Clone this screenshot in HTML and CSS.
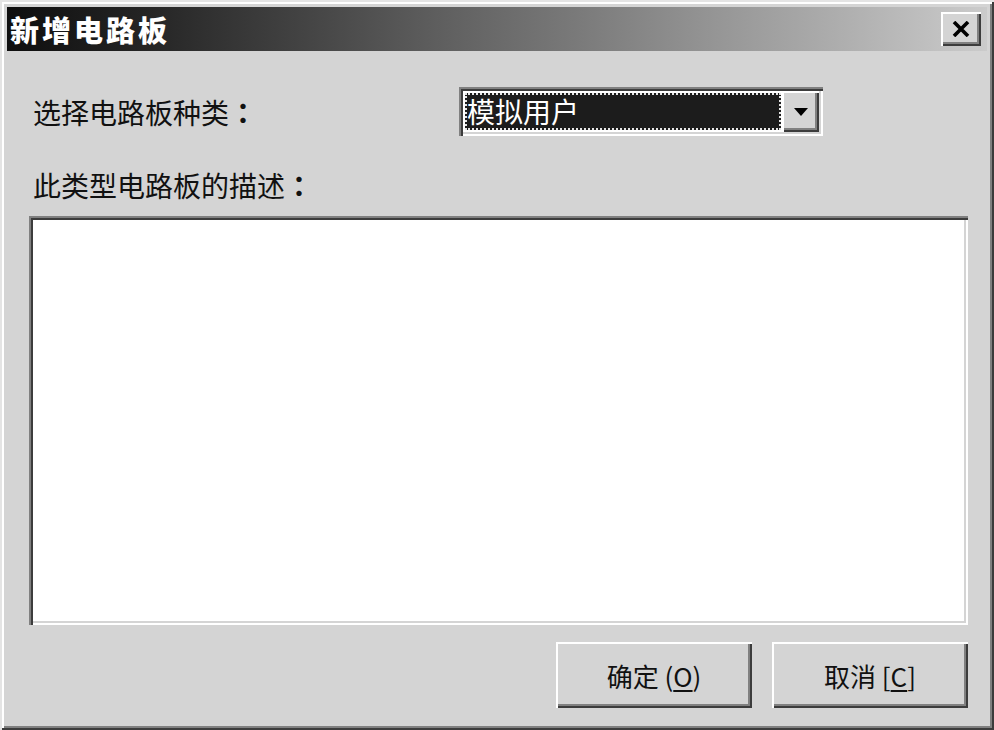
FILE: index.html
```html
<!DOCTYPE html>
<html lang="zh-CN">
<head>
  <meta charset="UTF-8">
  <title>新增电路板</title>
  <link rel="stylesheet" href="styles.css">
</head>
<body>
  <div class="window">
    <header class="titlebar">
      <span class="title">新增电路板</span>
      <button class="close" aria-label="关闭">
        <svg width="18" height="16" viewBox="0 0 18 16"><path d="M2 1 L16 15 M16 1 L2 15" stroke="#000" stroke-width="3.6" fill="none"/></svg>
      </button>
    </header>
    <main class="content">
      <div class="row">
        <label class="label">选择电路板种类<span class="colon">：</span></label>
        <div class="combo">
          <div class="combo-value">模拟用户</div>
          <div class="combo-btn">
            <svg width="14" height="8" viewBox="0 0 14 8"><path d="M0 0 H14 L7 8 Z" fill="#000"/></svg>
          </div>
        </div>
      </div>
      <label class="label label-desc">此类型电路板的描述<span class="colon">：</span></label>
      <div class="memo"></div>
      <div class="actions">
        <button class="btn">确定 (<u>O</u>)</button>
        <button class="btn">取消 [<u>C</u>]</button>
      </div>
    </main>
  </div>
</body>
</html>
```

FILE: styles.css
```css
:root {
  --face: #d4d4d4;
  --light: #e4e4e4;
  --shadow: #808080;
  --dark: #3c3c3c;
  --font: "Noto Sans CJK SC", "Noto Sans", sans-serif;
}

body {
  margin: 0;
  background: var(--face);
  font-family: var(--font);
}

.window {
  width: 994px;
  height: 730px;
  box-sizing: border-box;
  padding: 7px;
  background: var(--face);
  display: flex;
  flex-direction: column;
  box-shadow:
    inset 2px 2px var(--light),
    inset -2px -2px var(--dark),
    inset 4px 4px #fff,
    inset -4px -4px var(--shadow);
}

/* title bar */
.titlebar {
  height: 44px;
  flex-shrink: 0;
  display: flex;
  align-items: center;
  justify-content: space-between;
  background: linear-gradient(to right, #0e0e0e 0%, #262626 15%, #cbcbcb 100%);
}

.title {
  padding-left: 3px;
  color: #fff;
  font-size: 29px;
  font-weight: 900;
  letter-spacing: 3px;
  line-height: 44px;
}

.close {
  width: 40px;
  height: 34px;
  margin-right: 6px;
  padding: 0;
  border: 0;
  display: flex;
  align-items: center;
  justify-content: center;
  background: var(--face);
  box-shadow:
    inset 2px 2px #fff,
    inset -2px -2px var(--dark),
    inset -4px -4px var(--shadow);
}

/* body */
.content {
  padding: 0 19px 0 22px;
  display: flex;
  flex-direction: column;
}

.row {
  margin-top: 36px;
  height: 49px;
  display: grid;
  grid-template-columns: 430px 364px;
  align-items: center;
}

.label {
  padding-left: 4px;
  font-size: 28px;
  line-height: 32px;
  color: #111;
}

.colon {
  display: inline-block;
  width: 28px;
  text-align: center;
  font-family: "Noto Sans CJK TC", sans-serif;
  font-weight: 700;
}

.label-desc {
  margin-top: 33px;
}

.combo {
  height: 49px;
  box-sizing: border-box;
  padding: 4px;
  display: flex;
  background: #fff;
  box-shadow:
    inset 2px 2px var(--shadow),
    inset 4px 4px var(--dark),
    inset -2px -2px #fff,
    inset -4px -4px var(--face);
}

.combo-value {
  flex: 1;
  margin: 2px 1px 2px 2px;
  border: 2px dotted #e6e6e6;
  background: #1c1c1c;
  color: #fff;
  font-size: 28px;
  line-height: 33px;
  white-space: nowrap;
}

.combo-btn {
  width: 37px;
  display: flex;
  align-items: center;
  justify-content: center;
  background: var(--face);
  box-shadow:
    inset 2px 2px #fff,
    inset -2px -2px var(--dark),
    inset -4px -4px var(--shadow);
}

.memo {
  margin-top: 15px;
  height: 409px;
  background: #fff;
  box-shadow:
    inset 2px 2px var(--shadow),
    inset 4px 4px var(--dark),
    inset -2px -2px #fff,
    inset -4px -4px var(--face);
}

.actions {
  margin-top: 17px;
  display: flex;
  justify-content: flex-end;
  gap: 20px;
}

.btn {
  width: 196px;
  height: 66px;
  padding: 0;
  border: 0;
  background: var(--face);
  font-family: var(--font);
  font-size: 26px;
  color: #111;
  box-shadow:
    inset 2px 2px #fff,
    inset -2px -2px var(--dark),
    inset -4px -4px var(--shadow);
}

.btn u {
  text-underline-offset: 3px;
}
```
